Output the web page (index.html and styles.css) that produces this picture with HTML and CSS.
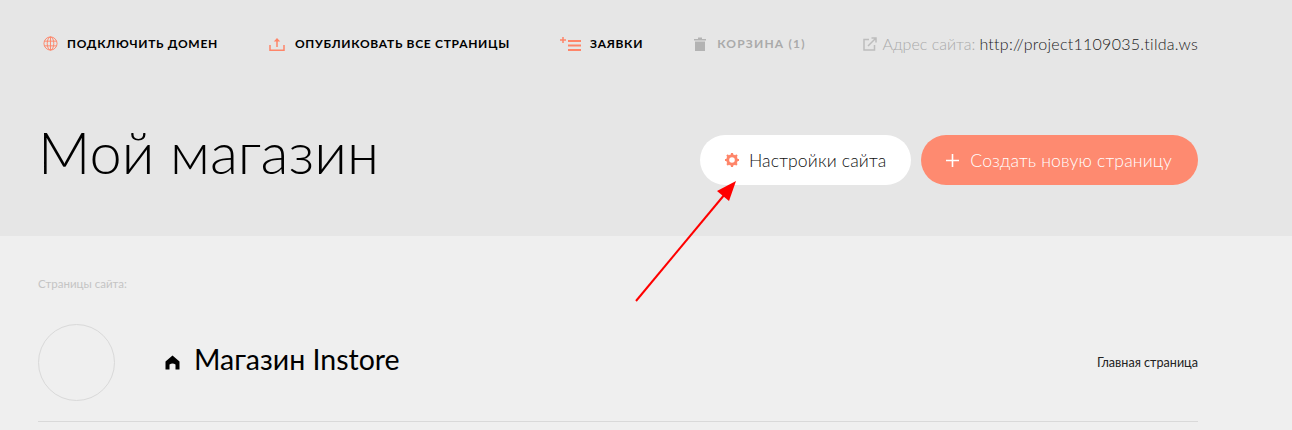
FILE: index.html
```html
<!DOCTYPE html>
<html lang="ru">
<head>
    <meta charset="UTF-8">
    <meta name="viewport" content="width=device-width, initial-scale=1.0">
    <title>Мой магазин</title>
    <link rel="stylesheet" href="styles.css">
</head>
<body>
    <header class="top">
        <nav class="menu">
            <a class="menu-item menu-domain" href="#">
                <svg class="menu-icon" width="15" height="15" viewBox="0 0 16 16" fill="none" stroke="#fe8569" stroke-width="1">
                    <circle cx="8" cy="8" r="7"/>
                    <ellipse cx="8" cy="8" rx="3.500" ry="7"/>
                    <path d="M8 1v14M1.500 5.500h13M1.500 10.500h13"/>
                </svg>
                <span>Подключить домен</span>
            </a>
            <a class="menu-item menu-publish" href="#">
                <svg class="menu-icon" width="16" height="16" viewBox="0 0 16 16" fill="none" stroke="#fe8569" stroke-width="1.500">
                    <path d="M1 9v5.300h14V9"/>
                    <path d="M8 11V3"/>
                    <path d="M4.800 5.500L8 2l3.200 3.500z" fill="#fe8569" stroke="none"/>
                </svg>
                <span>Опубликовать все страницы</span>
            </a>
            <a class="menu-item menu-leads" href="#">
                <svg class="menu-icon" width="21" height="14" viewBox="0 0 21 14" fill="none" stroke="#fe8569" stroke-width="2">
                    <path d="M8 5h13M8 9.500h13M8 14h13" transform="translate(0 -1)"/>
                    <path d="M0 3h6M3 0v6" stroke-width="1.500"/>
                </svg>
                <span>Заявки</span>
            </a>
            <a class="menu-item menu-trash" href="#">
                <svg class="menu-icon" width="12" height="14" viewBox="0 0 12 14" fill="#b3b3b3">
                    <path d="M0 2h4V0.500h4V2h4v1.500H0zM1 4.500h10V14H1z"/>
                </svg>
                <span>Корзина (1)</span>
            </a>
            <div class="site-address">
                <svg width="14" height="14" viewBox="0 0 14 14" fill="none" stroke="#bdbdbd" stroke-width="1.500">
                    <path d="M11.500 8v5H1V2.500h5"/>
                    <path d="M5 9l8-8M8.500 1H13v4.500"/>
                </svg>
                <span class="address-label">Адрес сайта:</span>
                <a class="address-link" href="#">http://project1109035.tilda.ws</a>
            </div>
        </nav>
        <div class="project-row">
            <h1 class="project-title">Мой магазин</h1>
            <div class="project-buttons">
                <a class="btn btn-white" href="#">
                    <svg width="14" height="14" viewBox="0 0 14 14">
                        <circle cx="7" cy="7" r="4.300" fill="none" stroke="#fe8569" stroke-width="3"/>
                        <path d="M7 0v14M0 7h14M2 2l10 10M12 2L2 12" stroke="#fe8569" stroke-width="2.200" stroke-dasharray="2 10"/>
                    </svg>
                    <span>Настройки сайта</span>
                </a>
                <a class="btn btn-orange" href="#">
                    <svg width="13" height="13" viewBox="0 0 13 13" stroke="#fff" stroke-width="1.600">
                        <path d="M6.500 0v13M0 6.500h13"/>
                    </svg>
                    <span>Создать новую страницу</span>
                </a>
            </div>
        </div>
    </header>

    <main class="pages">
        <div class="pages-label">Страницы сайта:</div>
        <div class="page-row">
            <div class="page-thumb"></div>
            <svg class="home-icon" width="15" height="15" viewBox="0 0 15 15" fill="#000">
                <path d="M7.500 0.500L14.500 6.500V14.500H10.500V9.500Q7.500 7.500 4.500 9.500V14.500H0.500V6.500z"/>
            </svg>
            <div class="page-name">Магазин Instore</div>
            <div class="page-note">Главная страница</div>
        </div>
    </main>

    <svg class="arrow" width="1292" height="430" viewBox="0 0 1292 430">
        <path d="M636 301L725 194" stroke="#f00" stroke-width="2" fill="none"/>
        <path d="M736 181L729 201L717 191z" fill="#f00"/>
    </svg>
</body>
</html>
```

FILE: styles.css
```css
html, body {
    margin: 0;
    height: 100%;
    overflow: hidden;
}
body {
    background-color: #efefef;
    color: #000;
    font-family: Lato, "Open Sans", sans-serif;
}
a {
    color: inherit;
    text-decoration: none;
}
.top {
    background: #e6e6e6;
    height: 236px;
    padding: 0 94px 0 38px;
    box-sizing: border-box;
}
.menu {
    display: flex;
    align-items: center;
    height: 87px;
}
.menu-item {
    display: flex;
    align-items: center;
    font-size: 12px;
    font-weight: 700;
    letter-spacing: 0.7px;
    text-transform: uppercase;
    margin-right: 50px;
}
.menu-icon {
    margin-right: 10px;
    flex: none;
}
.menu-domain {
    margin-right: 51px;
}
.menu-domain .menu-icon {
    margin: 0 9px 0 5px;
}
.menu-leads {
    margin-right: 51px;
}
.menu-leads .menu-icon {
    margin-right: 9px;
}
.menu-trash {
    color: #aaa;
    letter-spacing: 1.200px;
}
.menu-trash .menu-icon {
    margin-right: 11px;
}
.site-address {
    display: flex;
    align-items: center;
    margin-left: auto;
    font-size: 16px;
    font-weight: 300;
    white-space: nowrap;
}
.address-label {
    color: #aaa;
    margin: 0 4px 0 5px;
}
.address-link {
    color: #222;
    letter-spacing: 0.270px;
}
.project-row {
    display: flex;
    justify-content: space-between;
    align-items: center;
    height: 74px;
    margin-top: 36px;
}
.project-title {
    margin: 0 0 18px;
    font-size: 57.700px;
    font-weight: 300;
    color: #000;
}
.project-buttons {
    display: flex;
    gap: 10px;
}
.btn {
    display: flex;
    align-items: center;
    height: 50px;
    border-radius: 25px;
    font-size: 17.600px;
    font-weight: 300;
    letter-spacing: 0.150px;
    box-sizing: border-box;
}
.btn-white {
    background: #fff;
    color: #111;
    padding: 0 25px;
    gap: 10px;
}
.btn-orange {
    background: #fe8a70;
    color: #fff;
    padding: 0 26px 0 25px;
    gap: 11px;
}
.pages {
    margin: 0 94px 0 38px;
}
.pages-label {
    color: #c4c4c4;
    font-size: 11.500px;
    padding-top: 41px;
    height: 47px;
    line-height: 14px;
}
.page-row {
    display: flex;
    align-items: center;
    padding-bottom: 20px;
    border-bottom: 1px solid #d9d9d9;
}
.page-thumb {
    width: 75px;
    height: 75px;
    border: 1px solid #d9d9d9;
    border-radius: 50%;
    margin-right: 50px;
}
.home-icon {
    margin: 0 15px 0 0;
}
.page-name {
    font-size: 28.500px;
    flex: 1;
    margin-bottom: 8px;
    margin-left: -1px;
}
.page-note {
    font-size: 12.600px;
    color: #222;
}
.arrow {
    position: absolute;
    left: 0;
    top: 0;
    pointer-events: none;
}
```
